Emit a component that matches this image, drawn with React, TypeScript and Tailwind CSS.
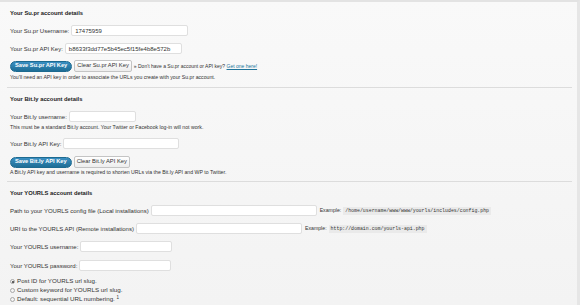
import React from "react";

function Input({ w, value }: { w: string; value?: string }) {
  return (
    <div className={`${w} h-[11px] bg-white border border-[#dfdfdf] rounded-[2px] flex items-center pl-[3px] text-[6px] text-[#333] leading-none`}>
      {value}
    </div>
  );
}

function Label({ children }: { children: React.ReactNode }) {
  return <span className="text-[6px] text-[#333] leading-none whitespace-nowrap">{children}</span>;
}

function SaveBtn({ children }: { children: React.ReactNode }) {
  return (
    <div className="h-[11px] px-[4px] rounded-full bg-linear-to-b from-[#3a8fc2] to-[#1e6e96] border border-[#1d6a90] text-white font-bold text-[5.7px] leading-none flex items-center whitespace-nowrap">
      {children}
    </div>
  );
}

function ClearBtn({ children }: { children: React.ReactNode }) {
  return (
    <div className="h-[12px] px-[2px] rounded-[2px] bg-linear-to-b from-white to-[#ededed] border border-[#c4c4c4] text-[#333] text-[5.8px] leading-none flex items-center whitespace-nowrap">
      {children}
    </div>
  );
}

function Heading({ children }: { children: React.ReactNode }) {
  return <div className="h-[10px] leading-[10px] font-bold text-[5.8px] text-[#222] whitespace-nowrap">{children}</div>;
}

function Note({ children, cls = "" }: { children: React.ReactNode; cls?: string }) {
  return <div className={`h-[6px] leading-[6px] text-[5.2px] text-[#333] whitespace-nowrap ${cls}`}>{children}</div>;
}

function Code({ children }: { children: React.ReactNode }) {
  return (
    <span className="bg-[#eaeaea] px-[2px] font-['Liberation_Mono',monospace] text-[4.9px] leading-[8px] text-[#333]">{children}</span>
  );
}

function Radio({ checked, children }: { checked?: boolean; children: React.ReactNode }) {
  return (
    <div className="h-[9px] flex items-center gap-[2px]">
      <div className="w-[5px] h-[5px] rounded-full border border-[#a8a8a8] bg-[#f3f3f3] flex items-center justify-center">
        {checked && <div className="w-[2px] h-[2px] rounded-full bg-[#333]" />}
      </div>
      <span className="text-[6.2px] text-[#333] leading-none whitespace-nowrap">{children}</span>
    </div>
  );
}

export default function App() {
  return (
    <div className="w-[580px] h-[305px] overflow-hidden bg-linear-to-b from-[#f9f9f9] to-[#f3f3f3] border-t-2 border-[#e3e3e3] border-r-[3px] border-r-[#e6e6e6] font-['Liberation_Sans',Arial,sans-serif]">
      <div className="pl-[7px] pr-[5px]">
        {/* Su.pr */}
        <div className="border-b border-[#dcdcdc] pl-[3px] pb-[7px]">
          <div className="mt-[6px]">
            <Heading>Your Su.pr account details</Heading>
          </div>
          <div className="mt-[7px] flex items-center gap-[2px]">
            <Label>Your Su.pr Username:</Label>
            <Input w="w-[117px]" value="17475959" />
          </div>
          <div className="mt-[7px] flex items-center gap-[2px]">
            <Label>Your Su.pr API Key:</Label>
            <Input w="w-[117px]" value="b8633f3dd77e5b45ec5f15fe4b8e572b" />
          </div>
          <div className="mt-[6px] flex items-center gap-[2px]">
            <SaveBtn>Save Su.pr API Key</SaveBtn>
            <ClearBtn>Clear Su.pr API Key</ClearBtn>
            <span className="text-[5px] text-[#333] leading-none whitespace-nowrap">
              » Don't have a Su.pr account or API key? <span className="text-[#21759b] underline">Get one here!</span>
            </span>
          </div>
          <Note cls="mt-[2px]">You'll need an API key in order to associate the URLs you create with your Su.pr account.</Note>
        </div>

        {/* Bit.ly */}
        <div className="border-b border-[#dcdcdc] pl-[3px] pb-[6px]">
          <div className="mt-[6px]">
            <Heading>Your Bit.ly account details</Heading>
          </div>
          <div className="mt-[7px] flex items-center gap-[2px]">
            <Label>Your Bit.ly username:</Label>
            <Input w="w-[67px]" />
          </div>
          <Note cls="mt-[2px]">This must be a standard Bit.ly account. Your Twitter or Facebook log-in will not work.</Note>
          <div className="mt-[8px] flex items-center gap-[2px]">
            <Label>Your Bit.ly API Key:</Label>
            <Input w="w-[116px]" />
          </div>
          <div className="mt-[7px] flex items-center gap-[2px]">
            <SaveBtn>Save Bit.ly API Key</SaveBtn>
            <ClearBtn>Clear Bit.ly API Key</ClearBtn>
          </div>
          <Note cls="mt-[1px]">A Bit.ly API key and username is required to shorten URLs via the Bit.ly API and WP to Twitter.</Note>
        </div>

        {/* YOURLS */}
        <div className="pl-[3px]">
          <div className="mt-[6px]">
            <Heading>Your YOURLS account details</Heading>
          </div>
          <div className="mt-[7px] flex items-center gap-[2px]">
            <Label>Path to your YOURLS config file (Local installations)</Label>
            <Input w="w-[166px]" />
            <span className="ml-[1px] text-[5.2px] text-[#333] leading-none whitespace-nowrap">Example:</span>
            <Code>/home/username/www/www/yourls/includes/config.php</Code>
          </div>
          <div className="mt-[7px] flex items-center gap-[2px]">
            <Label>URI to the YOURLS API (Remote installations)</Label>
            <Input w="w-[166px]" />
            <span className="ml-[1px] text-[5.2px] text-[#333] leading-none whitespace-nowrap">Example:</span>
            <Code>http://domain.com/yourls-api.php</Code>
          </div>
          <div className="mt-[7px] flex items-center gap-[2px]">
            <Label>Your YOURLS username:</Label>
            <Input w="w-[92px]" />
          </div>
          <div className="mt-[8px] flex items-center gap-[2px]">
            <Label>Your YOURLS password:</Label>
            <Input w="w-[92px]" />
          </div>
          <div className="mt-[6px]">
            <Radio checked>Post ID for YOURLS url slug.</Radio>
            <Radio>Custom keyword for YOURLS url slug.</Radio>
            <Radio>
              Default: sequential URL numbering. <sup className="text-[4.5px]">1</sup>
            </Radio>
          </div>
        </div>
      </div>
    </div>
  );
}
